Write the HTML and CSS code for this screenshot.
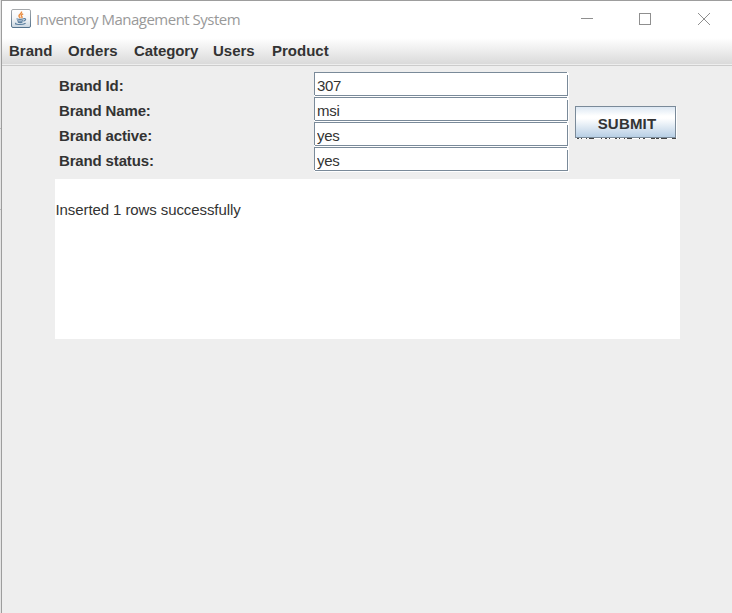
FILE: index.html
```html
<!DOCTYPE html>
<html lang="en">
<head>
<meta charset="utf-8">
<title>Inventory Management System</title>
<link rel="stylesheet" href="styles.css">
</head>
<body>
<div class="desktop">
  <div class="edge"></div>
  <div class="window">
    <header class="titlebar">
      <svg class="app-icon" width="20" height="19" viewBox="0 0 20 19">
        <defs>
          <linearGradient id="tile" x1="0" y1="0" x2="0" y2="1"><stop offset="0" stop-color="#fff"/><stop offset=".5" stop-color="#f4f6f8"/><stop offset="1" stop-color="#c9d5df"/></linearGradient>
          <linearGradient id="rim" x1="0" y1="0" x2="0" y2="1"><stop offset="0" stop-color="#a6a9ac"/><stop offset="1" stop-color="#55738d"/></linearGradient>
        </defs>
        <rect x=".5" y=".5" width="19" height="18" rx="1.5" fill="url(#tile)" stroke="url(#rim)"/>
        <path d="M10.500 2.500c.9 2.300-3.300 2.700-2.500 4.900.2.700 1 1.200 1.500 1.700M12.200 4.800c-2.200 1-2.500 1.900-1.300 2.700.5.500.1 1.200-.4 1.700" fill="none" stroke="#ea8a3c" stroke-width="1.400"/>
        <path d="M5.500 9.700c1.800.8 5.500.7 7.200 0M6.200 11.600c1.800.7 4.300.6 5.800 0M6.900 13.200c1.500.6 3.200.5 4.500 0M12.700 9.700c2.600-.5 2.700 1.600-.3 2.400M5.200 14c-3.200 1.600 6 2.300 9.400.2" fill="none" stroke="#5b7f9f" stroke-width="1.200"/>
      </svg>
      <h1 class="title">Inventory Management System</h1>
      <svg class="controls" width="124" height="14" viewBox="0 0 124 14" fill="none" stroke="#8f8f8f">
        <path d="M0 5.500h12"/>
        <rect x="58.500" y=".5" width="11" height="11"/>
        <path d="M117 0l12 12M129 0l-12 12"/>
      </svg>
    </header>
    <nav class="menubar">
      <span class="brand">Brand</span><span class="orders">Orders</span><span class="category">Category</span><span class="users">Users</span><span>Product</span>
    </nav>
    <main class="content">
      <div class="form">
        <div class="fields">
          <label for="id">Brand Id:</label><input id="id" value="307">
          <label for="name">Brand Name:</label><input id="name" value="msi">
          <label for="active">Brand active:</label><input id="active" value="yes">
          <label for="status">Brand status:</label><input id="status" value="yes">
        </div>
        <div class="action">
          <button>SUBMIT</button>
          <svg class="trace" width="102" height="1" viewBox="0 0 102 1"><path d="M2 .5h70" stroke="#444" stroke-dasharray="2 2 1 4 1 2 5 7 1 3 2 2 1 5"/><path d="M76 .5h25" stroke="#444" stroke-dasharray="4 1 3 2 6 5 4 9"/></svg>
        </div>
      </div>
      <div class="output">Inserted 1 rows successfully</div>
    </main>
  </div>
</div>
</body>
</html>
```
FILE: styles.css
```css
* { box-sizing: border-box; }
body {
  margin: 0;
  font: 15px/20px "Liberation Sans", Arial, sans-serif;
  color: #333;
  overflow: hidden;
}
.desktop { display: flex; width: 732px; height: 613px; background: #e4e4e4; }
.edge {
  width: 1px;
  background: linear-gradient(#e4e4e4 128px, #bbb 128px 129px, #e4e4e4 129px 209px, #bbb 209px 210px, #e4e4e4 210px);
}
.window {
  width: 731px;
  border-top: 1px solid #9d9d9d;
  border-left: 1px solid #9d9d9d;
  background: #eee;
}
.titlebar { display: flex; height: 37px; padding: 8px 0 0 9px; background: #fff; }
.app-icon { flex: none; }
.title {
  width: 203px;
  margin: 0 0 0 5px;
  font: 15px/21px "Open Sans", "Noto Sans", sans-serif;
  letter-spacing: -.5px;
  white-space: nowrap;
  color: #999;
}
.controls { flex: none; margin: 4px 0 0 342px; overflow: visible; }
.menubar {
  display: flex;
  height: 28px;
  padding: 3px 0 0 7px;
  font-weight: bold;
  background: linear-gradient(#fff, #dadada 26px, #eee 26px, #eee 27px, #ccc 27px);
}
.brand { width: 59px; }
.orders { width: 66px; letter-spacing: .1px; }
.category { width: 79px; letter-spacing: -.08px; }
.users { width: 59px; }
.content { padding: 6px 0 0 53px; }
.form { display: flex; height: 107px; }
.fields {
  display: grid;
  grid-template-columns: 255px 255px;
  grid-auto-rows: 25px;
  padding-left: 4px;
}
label { padding-top: 4px; font-weight: bold; letter-spacing: -.15px; }
input {
  width: 254px;
  height: 24px;
  padding: 4px 0 2px 3px;
  border: 0;
  border-radius: 0;
  background:
    linear-gradient(#7a8a99, #7a8a99) 0 0 / 253px 1px no-repeat,
    linear-gradient(#7a8a99, #7a8a99) 0 0 / 1px 23px no-repeat,
    linear-gradient(#7a8a99, #7a8a99) 1px 23px / 253px 1px no-repeat,
    linear-gradient(#7a8a99, #7a8a99) 253px 3px / 1px 21px no-repeat,
    #fff;
  box-shadow: 1px 1px #fff;
  font: inherit;
  letter-spacing: -.3px;
  color: inherit;
}
.action { padding: 34px 0 0 6px; }
button {
  display: block;
  width: 101px;
  height: 32px;
  padding: 2px 0 0 3px;
  border: 1px solid #7a8a99;
  border-radius: 0;
  background: linear-gradient(#dde8f3, #fff 30%, #fff 38%, #b8cfe5);
  box-shadow: 1px 1px #fff;
  font: bold 15px "Liberation Sans", Arial, sans-serif;
  letter-spacing: .2px;
  color: #333;
}
.trace { display: block; position: relative; }
.output { width: 625px; height: 160px; padding: 21px .5px; background: #fff; letter-spacing: -.09px; }
```
